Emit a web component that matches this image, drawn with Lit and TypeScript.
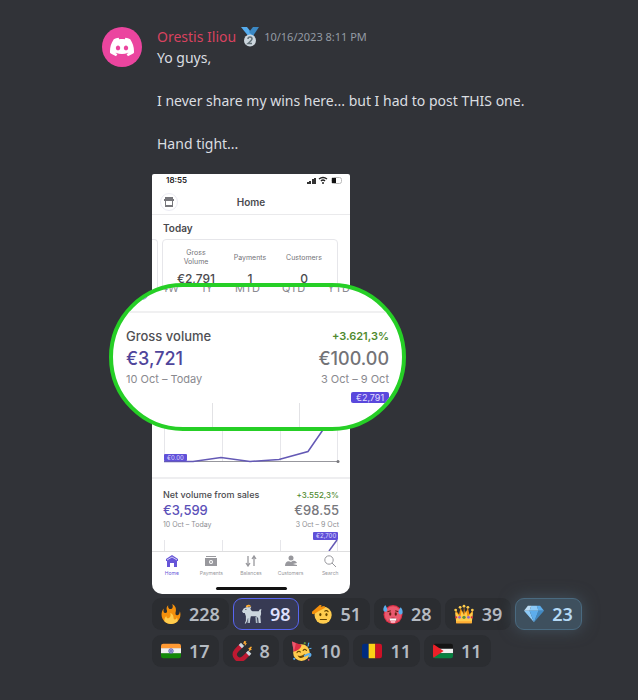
import { LitElement, html, svg, css } from "lit";
import { customElement } from "lit/decorators.js";
import { classMap } from "lit/directives/class-map.js";

const emoji: Record<string, unknown> = {
  fire: svg`<path fill="#F4900C" d="M35 19c0-2.062-.367-4.039-1.04-5.868-.46 5.389-3.333 8.157-6.335 6.868-2.812-1.208-.917-5.917-.777-8.164.236-3.809-.012-8.169-6.931-11.794 2.875 5.5.333 8.917-2.333 9.125-2.958.231-5.667-2.542-4.667-7.042-3.238 2.386-3.332 6.402-2.333 9 1.042 2.708-.042 4.958-2.583 5.208-2.84.28-4.418-3.041-2.963-8.333C2.52 10.965 1 14.805 1 19c0 9.389 7.611 17 17 17s17-7.611 17-17z"/><path fill="#FFCC4D" d="M28.394 23.999c.148 3.084-2.561 4.293-4.019 3.709-2.106-.843-1.541-2.291-2.083-5.291s-2.625-5.083-5.708-6c2.25 6.333-1.247 8.667-3.08 9.084-1.872.426-3.753-.001-3.968-4.007C7.352 23.668 6 26.676 6 30c0 .368.023.73.055 1.09C9.125 34.124 13.342 36 18 36s8.875-1.876 11.945-4.91c.032-.36.055-.722.055-1.09 0-2.187-.584-4.236-1.606-6.001z"/>`,
  goat: svg`<path fill="#FFAC33" d="M7 5c0-3 4-5 7-3 2 1 2 3 1 4-1-2-4-2-5 1z"/><path fill="#CCD6DD" d="M3 8l5-2 5 0 4-1-2 3c1 4 3 5 6 5h9l2-3 3-1-1 5c1 3 0 6-1 8l1 12h-4l-1-9-4-3-9 0-1 4-1 8h-3l-1-9-1 6-2 4H5l2-5 0-8-2-6-3 0-2-3z"/><path fill="#AAB8C2" d="M11 25l2 0v9h-3zM24 23l3 1 1 10h-3z"/><circle cx="7" cy="10" r="1" fill="#292F33"/>`,
  salute: svg`<circle cx="20" cy="20" r="15.500" fill="#FFCC4D"/><path fill="#F4900C" d="M0 14L14 2c2-1 4 0 3 2l-2 2 6-2c3 0 3 2 2 3L10 14l-6 4c-3 1-6-1-4-4z"/><ellipse cx="15" cy="19" rx="2" ry="3" fill="#664500"/><ellipse cx="26" cy="19" rx="2" ry="3" fill="#664500"/><path d="M15 28h11M23 13c2-2 5-1 6 1" stroke="#664500" stroke-width="2" fill="none" stroke-linecap="round"/>`,
  hot: svg`<circle cx="18" cy="19" r="17" fill="#DD2E44"/><circle cx="18" cy="19" r="15" fill="#EA596E"/><path d="M8 14l6-2M28 14l-6-2" stroke="#662113" stroke-width="2"/><ellipse cx="13" cy="18" rx="2" ry="3" fill="#662113"/><ellipse cx="23" cy="18" rx="2" ry="3" fill="#662113"/><path fill="#A83040" d="M10 31c0-9 16-9 16 0z"/><path fill="#fff" d="M12 26h12v4H12z"/><path fill="#FFB0BD" d="M14 30h8v4h-8z"/><path fill="#5DADEC" d="M4 2c4 5 5 11 1 12S-2 10 4 2zM32 6c4 5 5 12 0 13-6-1-5-7 0-13z"/>`,
  crown: svg`<path fill="#F4900C" d="M3 11l6 8 3-12 5 11 1-14 2 14 5-11 3 12 6-8-2 22H4z"/><path fill="#FFCC4D" d="M2 15c5 1 7 8 9 7s2-10 3-10 3 8 4 8 3-8 4-8 1 9 3 10 4-6 9-7l-2 19H4z"/><g fill="#FFCC4D"><circle cx="3" cy="11" r="2.500"/><circle cx="11" cy="6" r="2.500"/><circle cx="18" cy="4" r="2.500"/><circle cx="25" cy="6" r="2.500"/><circle cx="33" cy="11" r="2.500"/></g><path fill="#FFAC33" d="M4 31h28v4H4z"/><circle cx="18" cy="24" r="3" fill="#5C913B"/><circle cx="10" cy="24" r="2.500" fill="#9266CC"/><circle cx="26" cy="24" r="2.500" fill="#9266CC"/><circle cx="4" cy="24" r="2" fill="#DD2E44"/><circle cx="32" cy="24" r="2" fill="#DD2E44"/>`,
  gem: svg`<path fill="#BDDDF4" d="M13 3H7l-7 9h10z"/><path fill="#5DADEC" d="M36 12l-7-9h-6l3 9z"/><path fill="#4289C1" d="M26 12h10L18 33z"/><path fill="#8CCAF7" d="M10 12H0l18 21zm3-9l-3 9h16l-3-9z"/><path fill="#5DADEC" d="M18 33l-8-21h16z"/>`,
  india: svg`<path fill="#FF9933" d="M4 5h28a4 4 0 0 1 4 4v5H0V9a4 4 0 0 1 4-4z"/><path fill="#EEE" d="M0 13h36v10H0z"/><path fill="#138808" d="M0 22h36v5a4 4 0 0 1-4 4H4a4 4 0 0 1-4-4z"/><circle cx="18" cy="18" r="4" fill="#B9BCE0" stroke="#4C4CAD" stroke-width="1.500"/><circle cx="18" cy="18" r="1.500" fill="#34349A"/>`,
  magnet: svg`<path d="M17 8L8 17c-9 10 4 23 14 13l8-8" fill="none" stroke="#BE1931" stroke-width="8"/><path d="M15 10l4-4M28 24l4-4" stroke="#CCD6DD" stroke-width="8"/><path fill="#FFAC33" d="M22 0l4 1-2 3 3 0-4 5 0-4-3 0zM34 10l2 1-2 3 2 1-6 4 1-4-2-1z"/>`,
  party: svg`<circle cx="17" cy="21" r="15" fill="#FFCC4D"/><path fill="#DD2E44" d="M0 1l17 6c0 5-7 11-14 12z"/><path fill="#EA596E" d="M0 1l7 3-3 14-1 1z"/><path d="M9 21c1-3 5-3 6-1M20 17c2-3 5-2 6 0" stroke="#664500" stroke-width="2" fill="none" stroke-linecap="round"/><path fill="#664500" d="M10 26c5 2 10 0 13-3 1 6-8 12-13 3z"/><path fill="#5DADEC" d="M21 25c5-1 9-5 13-3 3 3-1 9-5 7l2-4-9 4z"/><circle cx="23" cy="4" r="2" fill="#5C913B"/><path d="M31 3c-4 2 1 4-3 7M31 14l4-1" stroke="#55ACEE" stroke-width="2" fill="none"/><circle cx="4" cy="32" r="2" fill="#55ACEE"/><circle cx="30" cy="34" r="1.500" fill="#EA596E"/>`,
  romania: svg`<path fill="#002B7F" d="M4 5h8v26H4a4 4 0 0 1-4-4V9a4 4 0 0 1 4-4z"/><path fill="#FCD116" d="M12 5h12v26H12z"/><path fill="#CE1126" d="M24 5h8a4 4 0 0 1 4 4v18a4 4 0 0 1-4 4h-8z"/>`,
  palestine: svg`<path fill="#141414" d="M4 5h28a4 4 0 0 1 4 4v5H0V9a4 4 0 0 1 4-4z"/><path fill="#EEE" d="M0 14h36v8H0z"/><path fill="#068241" d="M0 22h36v5a4 4 0 0 1-4 4H4a4 4 0 0 1-4-4z"/><path fill="#EC2028" d="M1 6l18 12L1 30l-1-3V9z"/>`,
};

const reactions = [
  { icon: "fire", name: "Fire", count: 228 },
  { icon: "goat", name: "Goat", count: 98, kind: "mine" },
  { icon: "salute", name: "Salute", count: 51 },
  { icon: "hot", name: "Hot face", count: 28 },
  { icon: "crown", name: "Crown", count: 39 },
  { icon: "gem", name: "Gem", count: 23, kind: "super" },
  { icon: "india", name: "India", count: 17 },
  { icon: "magnet", name: "Magnet", count: 8 },
  { icon: "party", name: "Party", count: 10 },
  { icon: "romania", name: "Romania", count: 11 },
  { icon: "palestine", name: "Palestine", count: 11 },
];

const tabs = [
  { label: "Home", art: svg`<path fill="currentColor" d="M6 0l6 4v2l-1 0v6H8V8H4v4H1V6L0 6V4z"/><path d="M1 5l5-3 5 3" stroke="#fff" stroke-width=".7" fill="none"/>` },
  { label: "Payments", art: svg`<path fill="currentColor" d="M1 1h10v1H1zM0 3h12v8H0z"/><circle cx="6" cy="7" r="2" fill="#fff"/><circle cx="6" cy="7" r="1" fill="currentColor"/>` },
  { label: "Balances", art: svg`<path d="M3 1v10M1 8l2 3 2-3M9 11V1M7 4l2-3 2 3" stroke="currentColor" stroke-width="1.300" fill="none"/>` },
  { label: "Customers", art: svg`<circle cx="6" cy="3" r="2.500" fill="currentColor"/><path fill="currentColor" d="M0 11c0-4 3-6 6-4 3-3 6 0 6 1L8 9l4 1v1z"/>` },
  { label: "Search", art: svg`<circle cx="5" cy="5" r="4.200" fill="none" stroke="currentColor"/><path d="M8 8l4 4" stroke="currentColor"/>` },
];

@customElement("stripe-phone")
class StripePhone extends LitElement {
  static styles = css`
    :host { display: flex; flex-direction: column; background: #fff; color: #4a4a4e; border-radius: 2px 2px 10px 10px; overflow: hidden; font-family: Inter, "Liberation Sans", sans-serif; }
    .status { display: flex; justify-content: space-between; align-items: center; height: 12px; padding: 0 7px 0 14px; font-size: 8px; font-weight: 600; color: #222; }
    .status svg { width: 36px; height: 8px; }
    .head { display: grid; grid-template-columns: 18px 1fr 18px; align-items: center; box-sizing: border-box; height: 29px; padding: 4px 8px 0; border-bottom: 1px solid #eaeaec; text-align: center; font-size: 10px; font-weight: 600; }
    .store { display: flex; align-items: center; justify-content: center; width: 18px; height: 18px; padding: 0; border: 1px solid #ececf4; border-radius: 50%; background: #fff; }
    h2 { margin: 0; font-size: 10px; font-weight: 600; line-height: 22px; }
    .today { padding: 2px 0 0 11px; }
    .cards { display: grid; grid-template-columns: 6px 1fr; column-gap: 4px; padding-right: 12px; }
    .prev { border: 1px solid #e6e6ea; border-left: 0; border-radius: 0 4px 4px 0; }
    .stats { display: grid; grid-template-columns: repeat(3, 1fr); margin: 0; padding: 7px 6px 8px; border: 1px solid #e6e6ea; border-radius: 4px; text-align: center; }
    .stat { display: flex; flex-direction: column; }
    dt { display: flex; align-items: center; justify-content: center; height: 20px; font-size: 7px; line-height: 9px; color: #737378; }
    dd { margin: 4px 0 0; font-size: 12px; line-height: 16px; font-weight: 500; }
    .gross { margin: 126px 10px 0 11px; height: 44px; }
    .net { display: grid; grid-template-columns: 1fr auto; margin-top: 11px; border-top: 2px solid #eeeef0; padding: 10px 11px 0; }
    .net h2, .up { line-height: 12px; font-size: 9px; font-weight: 500; }
    .net .up { font-size: 8px; color: #4f8a2e; text-align: right; }
    .now, .before { font-size: 13px; line-height: 18px; font-weight: 500; color: #5b50b8; }
    .before { color: #77777c; text-align: right; }
    .range { font-size: 7px; line-height: 12px; color: #8d8d92; }
    .right { text-align: right; }
    .mini { height: 20px; margin: 0 10px 0 11px; }
    svg text { font-size: 6px; fill: #dcd8ff; }
    .tabs { display: grid; grid-template-columns: repeat(5, 1fr); border-top: 1px solid #dededf; padding-top: 3px; }
    .tab { display: flex; flex-direction: column; align-items: center; gap: 2px; padding: 0; border: 0; background: none; color: #98989d; font-family: inherit; font-size: 5px; line-height: 8px; }
    .tab svg { width: 12px; height: 12px; }
    .tab.on { color: #6655d8; }
    .bar { align-self: center; width: 71px; height: 3px; margin: 10px 0 4px; border-radius: 2px; background: #111; }
  `;
  render() {
    return html`
      <div class="status"><span>18:55</span>
        <svg viewBox="0 0 36 8"><path fill="#333" d="M0 6h2v2H0zM2 5h2v3H2zM5 3h2v5H5zM7 2h2v6H7z"/><path d="M12 3q4-3 8 0M14 5q2-2 4 0" fill="none" stroke="#222" stroke-width="1.500"/><circle cx="16" cy="7" r="1" fill="#222"/><rect x="24.500" y="1.500" width="10" height="6" rx="2" fill="none" stroke="#bbb"/><path fill="#111" d="M25 2h4v5h-4z"/></svg>
      </div>
      <div class="head">
        <button class="store" aria-label="Store"><svg width="10" height="10" viewBox="0 0 10 10"><path fill="#77777c" d="M1 0h8v2H1zM0 2h10v2H0zM1 4h1v4h6V4h1v6H1z"/></svg></button>
        <span>Home</span>
      </div>
      <h2 class="today">Today</h2>
      <div class="cards"><div class="prev"></div>
        <dl class="stats">
          <div class="stat"><dt>Gross<br>Volume</dt><dd>€2,791</dd></div>
          <div class="stat"><dt>Payments</dt><dd>1</dd></div>
          <div class="stat"><dt>Customers</dt><dd>0</dd></div>
        </dl>
      </div>
      <svg class="gross" viewBox="0 0 177 44" preserveAspectRatio="none">
        <path d="M1.500 0v40M59.500 0v40M117.500 0v40M174.500 0v40" stroke="#e6e6ea"/>
        <path d="M1 39.500h174" stroke="#97979d"/><circle cx="175" cy="39.500" r="1.500" fill="#77777c"/>
        <path d="M1 39.500h29l28-4 29 4 29-2 29-8 20-29" fill="none" stroke="#6459b5" stroke-width="1.500"/>
        <rect x="1" y="32" width="23" height="7" rx="1" fill="#6050d8"/><text x="4" y="38">€0.00</text>
      </svg>
      <div class="net">
        <h2>Net volume from sales</h2><span class="up">+3.552,3%</span>
        <span class="now">€3,599</span><span class="before">€98.55</span>
        <span class="range">10 Oct – Today</span><span class="range right">3 Oct – 9 Oct</span>
      </div>
      <svg class="mini" viewBox="0 0 177 20" preserveAspectRatio="none">
        <path d="M1.500 9v11M59.500 9v11M117.500 9v11M174.500 9v11" stroke="#e6e6ea"/>
        <path d="M166 20l8-11" stroke="#6459b5" stroke-width="1.500"/>
        <rect x="150" y="1" width="25" height="8" rx="1" fill="#6050d8"/><text x="153" y="7">€2,700</text>
      </svg>
      <nav class="tabs">${tabs.map((t, i) => html`<button class=${classMap({ tab: true, on: i === 0 })}><svg viewBox="0 0 12 12">${t.art}</svg>${t.label}</button>`)}</nav>
      <div class="bar"></div>`;
  }
}

@customElement("volume-lens")
class VolumeLens extends LitElement {
  static styles = css`
    :host { display: block; box-sizing: border-box; border: 4px solid #26cf26; border-radius: 74px; overflow: hidden; background: #fff; font-family: Inter, "Liberation Sans", sans-serif; color: #8a8a8f; }
    .chip { position: absolute; left: 20px; top: -3px; width: 16px; height: 16px; border-radius: 50%; background: #6655d8; }
    .periods { display: flex; justify-content: space-between; height: 30px; margin-top: -6px; padding: 0 52px 0 48px; border-bottom: 2px solid #f0f0f1; font-size: 11px; line-height: 14px; }
    .rows { display: grid; grid-template-columns: 1fr auto; align-items: center; padding: 13px 13px 0; }
    h2 { margin: 0; font-size: 13px; line-height: 21px; font-weight: 500; color: #505054; }
    .up { font-size: 11px; font-weight: 600; color: #4f8a2e; text-align: right; }
    .now, .before { font-size: 18px; line-height: 23px; font-weight: 500; color: #4f459b; }
    .before { color: #737377; text-align: right; }
    .range { font-size: 11px; line-height: 18px; }
    .right { text-align: right; }
    .pill { box-sizing: border-box; width: 38px; margin: 4px 13px 0 auto; border-radius: 2px; background: #5a48dc; color: #e2deff; font-size: 9px; line-height: 11px; text-align: center; }
    .lines { height: 24px; width: 86px; margin-left: 99px; border: solid #e2e2e5; border-width: 0 1px; }
  `;
  render() {
    return html`
      <div class="chip"></div>
      <div class="periods"><span>4W</span><span>1Y</span><span>MTD</span><span>QTD</span><span>YTD</span></div>
      <div class="rows">
        <h2>Gross volume</h2><span class="up">+3.621,3%</span>
        <span class="now">€3,721</span><span class="before">€100.00</span>
        <span class="range">10 Oct – Today</span><span class="range right">3 Oct – 9 Oct</span>
      </div>
      <div class="pill">€2,791</div>
      <div class="lines"></div>`;
  }
}

@customElement("app-root")
class AppRoot extends LitElement {
  static styles = css`
    :host { display: block; box-sizing: border-box; min-height: 100vh; padding: 26px 56px 26px 102px; background: #313338; color: #dbdee1; font-family: "Noto Sans", "Liberation Sans", sans-serif; font-size: 14px; line-height: 21px; }
    .message { display: grid; grid-template-columns: 40px minmax(0, 1fr); column-gap: 10px; align-items: start; }
    .avatar { display: flex; align-items: center; justify-content: center; height: 40px; margin-top: 1px; border-radius: 50%; background: #eb459f; }
    .meta { display: flex; align-items: center; gap: 5px; height: 21px; padding-left: 5px; }
    .author { color: #d8425f; text-decoration: none; }
    time { font-size: 11px; color: #949ba4; }
    p { margin: 0 0 22px; padding-left: 5px; }
    p:last-of-type { margin-bottom: 20px; }
    .shot { position: relative; width: 198px; }
    volume-lens { position: absolute; left: -43px; top: 109px; width: 297px; height: 148px; }
    .reactions { display: flex; flex-wrap: wrap; gap: 5px 4px; margin-top: 4px; }
    .reaction { display: flex; align-items: center; gap: 8px; box-sizing: border-box; height: 32px; padding: 0 8px; border: 1px solid transparent; border-radius: 9px; background: #2b2d31; color: #b5bac1; font-family: inherit; font-size: 18px; font-weight: 600; line-height: 24px; }
    .reaction svg { width: 20px; height: 20px; }
    .mine { background: #373a53; border-color: #5865f2; color: #dee0fc; }
    .super { background: #3e505e; border-color: #4a6a80; color: #b4d9f5; box-shadow: 0 0 16px #43525e; }
  `;
  render() {
    return html`
      <article class="message">
        <div class="avatar"><svg width="24" height="24" viewBox="0 0 24 24" fill="#fff"><path d="M20.317 4.3698a19.7913 19.7913 0 00-4.8851-1.5152.0741.0741 0 00-.0785.0371c-.211.3753-.4447.8648-.6083 1.2495-1.8447-.2762-3.68-.2762-5.4868 0-.1636-.3933-.4058-.8742-.6177-1.2495a.077.077 0 00-.0785-.037 19.7363 19.7363 0 00-4.8852 1.515.0699.0699 0 00-.0321.0277C.5334 9.0458-.319 13.5799.0992 18.0578a.0824.0824 0 00.0312.0561c2.0528 1.5076 4.0413 2.4228 5.9929 3.0294a.0777.0777 0 00.0842-.0276c.4616-.6304.8731-1.2952 1.226-1.9942a.076.076 0 00-.0416-.1057c-.6528-.2476-1.2743-.5495-1.8722-.8923a.077.077 0 01-.0076-.1277c.1258-.0943.2517-.1923.3718-.2914a.0743.0743 0 01.0776-.0105c3.9278 1.7933 8.18 1.7933 12.0614 0a.0739.0739 0 01.0785.0095c.1202.099.246.1981.3728.2924a.077.077 0 01-.0066.1276 12.2986 12.2986 0 01-1.873.8914.0766.0766 0 00-.0407.1067c.3604.698.7719 1.3628 1.225 1.9932a.076.076 0 00.0842.0286c1.961-.6067 3.9495-1.5219 6.0023-3.0294a.077.077 0 00.0313-.0552c.5004-5.177-.8382-9.6739-3.5485-13.6604a.061.061 0 00-.0312-.0286zM8.02 15.3312c-1.1825 0-2.1569-1.0857-2.1569-2.419 0-1.3332.9555-2.4189 2.157-2.4189 1.2108 0 2.1757 1.0952 2.1568 2.419 0 1.3332-.9555 2.4189-2.1569 2.4189zm7.9748 0c-1.1825 0-2.1569-1.0857-2.1569-2.419 0-1.3332.9554-2.4189 2.1569-2.4189 1.2108 0 2.1757 1.0952 2.1568 2.419 0 1.3332-.946 2.4189-2.1568 2.4189Z"/></svg></div>
        <div class="body">
          <header class="meta">
            <a class="author" href="#">Orestis Iliou</a>
            <svg width="18" height="20" viewBox="0 0 18 20"><path fill="#55ACEE" d="M0 0h6l7 9-5 1z"/><path fill="#3B88C3" d="M12 0h6l-6 9-4-4z"/><circle cx="9" cy="13.500" r="6" fill="#CCD6DD"/><path d="M7 12q0-2 2-2t2 2q0 1-4 4.500h4" fill="none" stroke="#627077" stroke-width="1.500"/></svg>
            <time datetime="2023-10-16T20:11">10/16/2023 8:11 PM</time>
          </header>
          <p>Yo guys,</p>
          <p>I never share my wins here... but I had to post THIS one.</p>
          <p>Hand tight...</p>
          <div class="shot"><stripe-phone></stripe-phone><volume-lens></volume-lens></div>
          <div class="reactions">
            ${reactions.map((r) => html`<button class=${classMap({ reaction: true, mine: r.kind === "mine", super: r.kind === "super" })} aria-label="${r.name}, ${r.count}"><svg viewBox="0 0 36 36">${emoji[r.icon]}</svg>${r.count}</button>`)}
          </div>
        </div>
      </article>`;
  }
}
